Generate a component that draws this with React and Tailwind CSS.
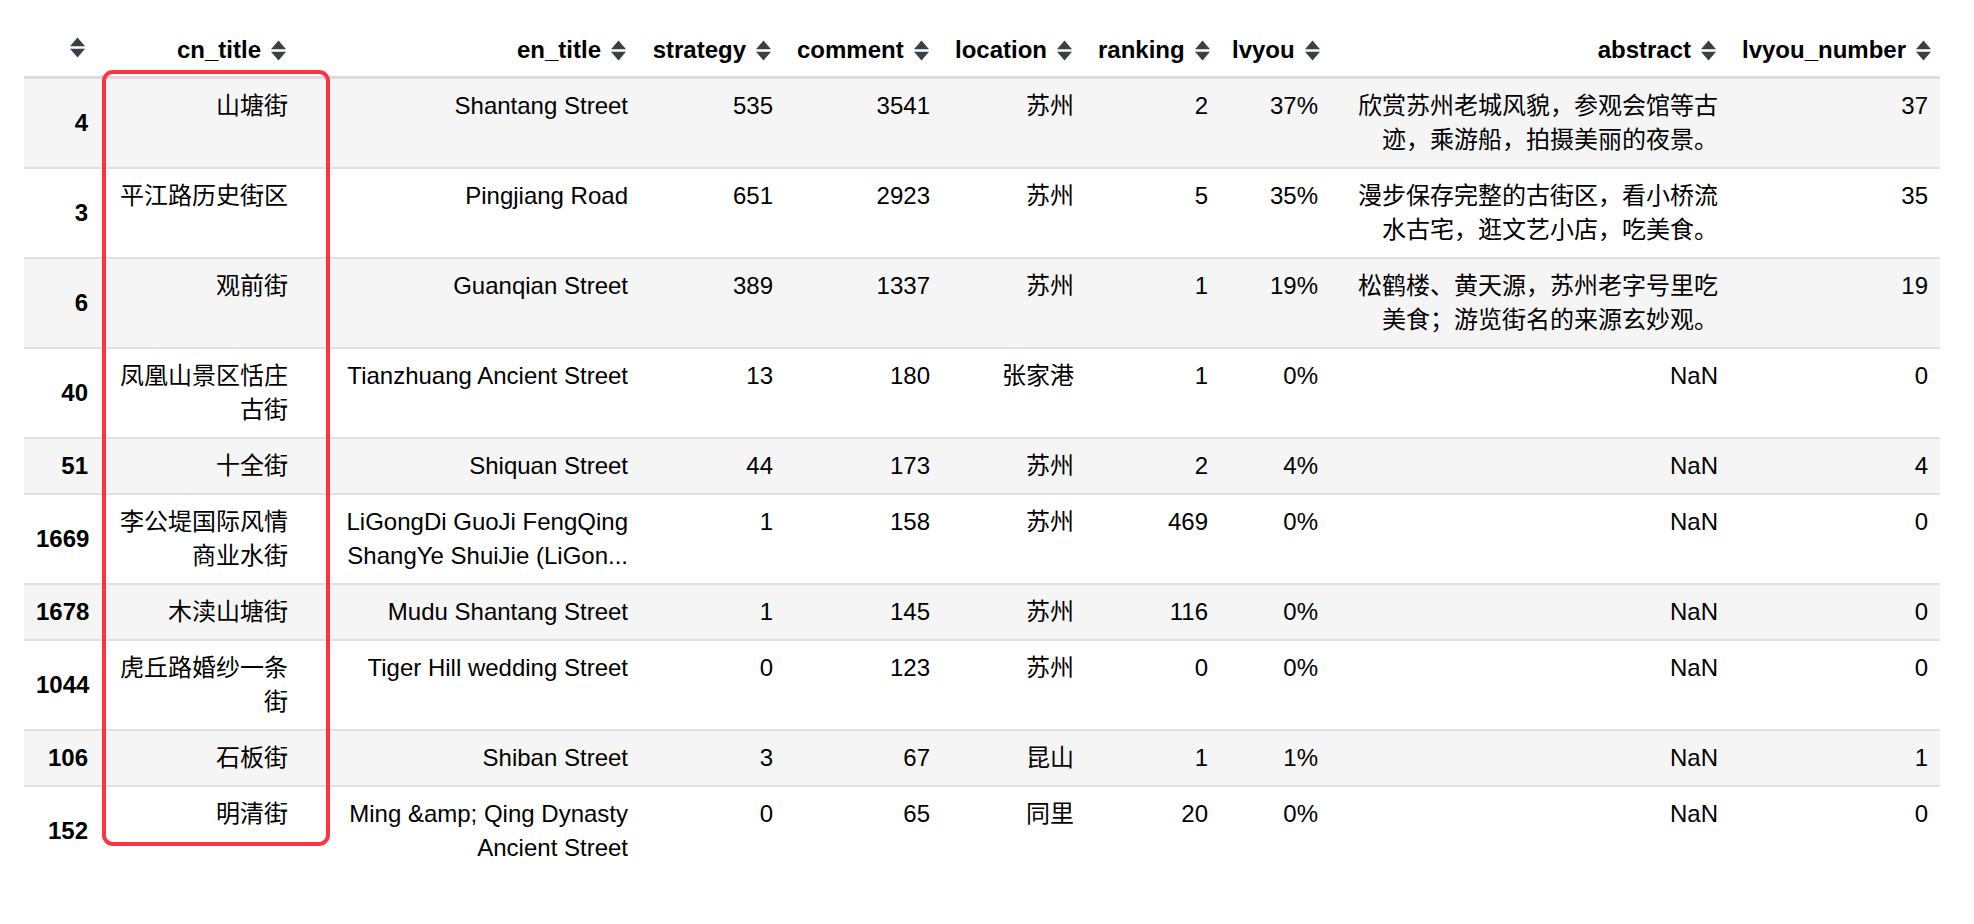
import React from 'react';

const columns = [
  { key: 'cn', label: 'cn_title', width: 'w-[200px]' },
  { key: 'en', label: 'en_title', width: 'w-[340px]' },
  { key: 'strategy', label: 'strategy', width: 'w-[145px]' },
  { key: 'comment', label: 'comment', width: 'w-[157px]' },
  { key: 'location', label: 'location', width: 'w-[144px]' },
  { key: 'ranking', label: 'ranking', width: 'w-[134px]' },
  { key: 'lvyou', label: 'lvyou', width: 'w-[110px]' },
  { key: 'abstract', label: 'abstract', width: 'w-[400px]' },
  { key: 'lvyou_number', label: 'lvyou_number', width: 'w-[210px]' },
];

const rows = [
  { idx: 4, cn: '山塘街', en: 'Shantang Street', strategy: 535, comment: 3541, location: '苏州', ranking: 2, lvyou: '37%', abstract: '欣赏苏州老城风貌，参观会馆等古迹，乘游船，拍摄美丽的夜景。', lvyou_number: 37 },
  { idx: 3, cn: '平江路历史街区', en: 'Pingjiang Road', strategy: 651, comment: 2923, location: '苏州', ranking: 5, lvyou: '35%', abstract: '漫步保存完整的古街区，看小桥流水古宅，逛文艺小店，吃美食。', lvyou_number: 35 },
  { idx: 6, cn: '观前街', en: 'Guanqian Street', strategy: 389, comment: 1337, location: '苏州', ranking: 1, lvyou: '19%', abstract: '松鹤楼、黄天源，苏州老字号里吃美食；游览街名的来源玄妙观。', lvyou_number: 19 },
  { idx: 40, cn: '凤凰山景区恬庄古街', en: 'Tianzhuang Ancient Street', strategy: 13, comment: 180, location: '张家港', ranking: 1, lvyou: '0%', abstract: 'NaN', lvyou_number: 0 },
  { idx: 51, cn: '十全街', en: 'Shiquan Street', strategy: 44, comment: 173, location: '苏州', ranking: 2, lvyou: '4%', abstract: 'NaN', lvyou_number: 4 },
  { idx: 1669, cn: '李公堤国际风情商业水街', en: 'LiGongDi GuoJi FengQing ShangYe ShuiJie (LiGon...', strategy: 1, comment: 158, location: '苏州', ranking: 469, lvyou: '0%', abstract: 'NaN', lvyou_number: 0 },
  { idx: 1678, cn: '木渎山塘街', en: 'Mudu Shantang Street', strategy: 1, comment: 145, location: '苏州', ranking: 116, lvyou: '0%', abstract: 'NaN', lvyou_number: 0 },
  { idx: 1044, cn: '虎丘路婚纱一条街', en: 'Tiger Hill wedding Street', strategy: 0, comment: 123, location: '苏州', ranking: 0, lvyou: '0%', abstract: 'NaN', lvyou_number: 0 },
  { idx: 106, cn: '石板街', en: 'Shiban Street', strategy: 3, comment: 67, location: '昆山', ranking: 1, lvyou: '1%', abstract: 'NaN', lvyou_number: 1 },
  { idx: 152, cn: '明清街', en: 'Ming &amp; Qing Dynasty Ancient Street', strategy: 0, comment: 65, location: '同里', ranking: 20, lvyou: '0%', abstract: 'NaN', lvyou_number: 0 },
];

// up/down sort arrows shown beside each header
const SortIcon = () => (
  <svg width="15" height="21" viewBox="0 0 15 21" className="inline-block shrink-0">
    <polygon points="7.5,0.5 15,9.3 0,9.3" fill="#384146" />
    <polygon points="0,11.7 15,11.7 7.5,20.5" fill="#384146" />
  </svg>
);

export default function App() {
  return (
    <div
      className="min-h-screen bg-white text-black"
      style={{ fontFamily: '"Liberation Sans", "Noto Sans CJK SC", sans-serif' }}
    >
      <div className="relative pt-[23px] pl-[24px]">
        <table className="table-fixed border-collapse w-[1916px] text-[24px] leading-[34px]">
          <colgroup>
            <col className="w-[76px]" />
            {columns.map((col) => (
              <col key={col.key} className={col.width} />
            ))}
          </colgroup>
          <thead>
            <tr className="border-b-[3px] border-[#dcdcdc]">
              <th className="pl-[12px] pr-[15px] pt-[10px] pb-[9px] text-right">
                <span className="inline-flex items-center justify-end">
                  <SortIcon />
                </span>
              </th>
              {columns.map((col) => (
                <th key={col.key} className="pl-[12px] pr-[14px] pt-[10px] pb-[9px] text-right font-bold whitespace-nowrap">
                  <span className="inline-flex items-center justify-end gap-[10px]">
                    {col.label}
                    <SortIcon />
                  </span>
                </th>
              ))}
            </tr>
          </thead>
          <tbody>
            {rows.map((row, i) => (
              <tr
                key={row.idx}
                className={
                  (i % 2 === 0 ? 'bg-[#f5f5f5] ' : 'bg-white ') +
                  (i === rows.length - 1 ? '' : 'border-b-2 border-[#e0e0e0]')
                }
              >
                <th className="px-[12px] py-[10px] text-right align-middle font-bold">{row.idx}</th>
                {columns.map((col) => (
                  <td key={col.key} className="px-[12px] py-[10px] text-right align-top font-normal">
                    {row[col.key]}
                  </td>
                ))}
              </tr>
            ))}
          </tbody>
        </table>

        {/* red highlight drawn over the cn_title column */}
        <div className="absolute left-[102px] top-[70px] w-[228px] h-[776px] border-[4px] border-[#fa3442] rounded-[11px] pointer-events-none" />
      </div>
    </div>
  );
}
